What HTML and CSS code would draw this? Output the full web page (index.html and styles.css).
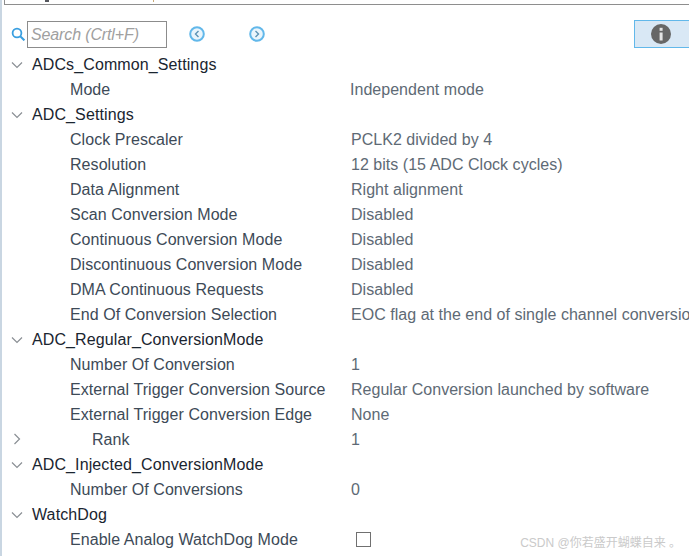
FILE: index.html
```html
<!DOCTYPE html>
<html lang="en">
<head>
    <meta charset="UTF-8">
    <title>ADC Parameter Settings</title>
    <link rel="stylesheet" href="styles.css">
</head>
<body>

<div class="panel">
    <div class="top-rule">
        <span class="clip-mark"></span>
        <span class="clip-mark clip-mark-2"></span>
    </div>

    <!-- Search bar -->
    <div class="toolbar">
        <svg class="icon-search" width="14" height="14" viewBox="0 0 14 14">
            <circle cx="6" cy="6" r="4.4" fill="none" stroke="#3a9fe0" stroke-width="1.8"/>
            <path d="M9 9l4.4 4.4" stroke="#3a9fe0" stroke-width="2"/>
        </svg>
        <div class="search-box">Search (Crtl+F)</div>
        <svg class="nav-btn" width="16" height="16" viewBox="0 0 16 16">
            <circle cx="8" cy="8" r="6.8" fill="#eaf5fc" stroke="#62b8ea" stroke-width="2"/>
            <path d="M9.5 5L6.5 8l3 3" fill="none" stroke="#5c93b5" stroke-width="1.4"/>
        </svg>
        <svg class="nav-btn nav-next" width="16" height="16" viewBox="0 0 16 16">
            <circle cx="8" cy="8" r="6.8" fill="#eaf5fc" stroke="#62b8ea" stroke-width="2"/>
            <path d="M6.5 5l3 3-3 3" fill="none" stroke="#5c93b5" stroke-width="1.4"/>
        </svg>
        <div class="info-btn">
            <svg width="20" height="20" viewBox="0 0 20 20">
                <circle cx="10" cy="10" r="10" fill="#666"/>
                <rect x="8.6" y="8.5" width="3" height="8" fill="#e4e4e4"/>
                <rect x="8.6" y="3.8" width="3" height="3" fill="#e4e4e4"/>
            </svg>
        </div>
    </div>

    <!-- Parameter tree -->
    <div class="tree">
        <div class="row group"><svg class="arrow" viewBox="0 0 12 8"><path d="M1 1.5l5 5 5-5"/></svg><span>ADCs_Common_Settings</span></div>
        <div class="row"><span class="name">Mode</span><span class="value shift-left">Independent mode</span></div>

        <div class="row group"><svg class="arrow" viewBox="0 0 12 8"><path d="M1 1.5l5 5 5-5"/></svg><span>ADC_Settings</span></div>
        <div class="row"><span class="name">Clock Prescaler</span><span class="value">PCLK2 divided by 4</span></div>
        <div class="row"><span class="name">Resolution</span><span class="value">12 bits (15 ADC Clock cycles)</span></div>
        <div class="row"><span class="name">Data Alignment</span><span class="value">Right alignment</span></div>
        <div class="row"><span class="name">Scan Conversion Mode</span><span class="value">Disabled</span></div>
        <div class="row"><span class="name">Continuous Conversion Mode</span><span class="value">Disabled</span></div>
        <div class="row"><span class="name">Discontinuous Conversion Mode</span><span class="value">Disabled</span></div>
        <div class="row"><span class="name">DMA Continuous Requests</span><span class="value">Disabled</span></div>
        <div class="row"><span class="name">End Of Conversion Selection</span><span class="value">EOC flag at the end of single channel conversion</span></div>

        <div class="row group"><svg class="arrow" viewBox="0 0 12 8"><path d="M1 1.5l5 5 5-5"/></svg><span>ADC_Regular_ConversionMode</span></div>
        <div class="row"><span class="name">Number Of Conversion</span><span class="value">1</span></div>
        <div class="row"><span class="name">External Trigger Conversion Source</span><span class="value">Regular Conversion launched by software</span></div>
        <div class="row"><span class="name">External Trigger Conversion Edge</span><span class="value">None</span></div>
        <div class="row"><svg class="arrow arrow-right" viewBox="0 0 8 12"><path d="M1.5 1l5 5-5 5"/></svg><span class="name sub">Rank</span><span class="value">1</span></div>

        <div class="row group"><svg class="arrow" viewBox="0 0 12 8"><path d="M1 1.5l5 5 5-5"/></svg><span>ADC_Injected_ConversionMode</span></div>
        <div class="row"><span class="name">Number Of Conversions</span><span class="value">0</span></div>

        <div class="row group"><svg class="arrow" viewBox="0 0 12 8"><path d="M1 1.5l5 5 5-5"/></svg><span>WatchDog</span></div>
        <div class="row"><span class="name">Enable Analog WatchDog Mode</span><span class="value"><span class="check"></span></span></div>
    </div>
</div>

<div class="watermark">CSDN @你若盛开蝴蝶自来 。</div>

</body>
</html>
```
FILE: styles.css
```css
html, body {
    margin: 0;
    height: 100%;
    overflow: hidden;
}
body {
    font-family: "Liberation Sans", Arial, "Noto Sans CJK SC", sans-serif;
    font-size: 16px;
    background-color: white;
    color: #3d4a57;
}
.panel {
    height: 556px;
    box-sizing: border-box;
    border-left: 2px solid #c9d6e2;
    overflow: hidden;
}
.top-rule {
    display: flex;
    height: 4px;
    margin-left: 2px;
    border-left: 1px solid #8e8e8e;
    border-bottom: 1px solid #8e8e8e;
}
/* descenders of the tab title that is cut off above the frame */
.clip-mark {
    width: 4px;
    height: 2px;
    margin-left: 40px;
    background-color: #55585e;
}
.clip-mark-2 {
    width: 1px;
    margin-left: 104px;
    background-color: #c9a878;
}
.toolbar {
    display: flex;
    align-items: center;
    height: 28px;
    margin-top: 15px;
    padding-left: 9px;
}
.icon-search {
    flex: none;
}
.search-box {
    flex: none;
    width: 135px;
    height: 25px;
    line-height: 25px;
    margin-left: 2px;
    padding-left: 3px;
    border: 1px solid #8c8c8c;
    font-style: italic;
    letter-spacing: -0.13px;
    color: #a0a0a0;
}
.nav-btn {
    flex: none;
    margin-left: 22px;
}
.nav-next {
    margin-left: 44px;
}
.info-btn {
    flex: none;
    display: flex;
    align-items: center;
    justify-content: center;
    box-sizing: border-box;
    width: 60px;
    height: 28px;
    margin-left: 369px;
    padding-right: 6px;
    border: 1px solid #62b8ea;
    background-color: #d9e8f5;
}
.tree {
    margin-top: 4px;
}
.row {
    display: flex;
    align-items: center;
    height: 25px;
    white-space: nowrap;
    position: relative;
}
.group {
    color: #1a2530;
    padding-left: 30px;
    letter-spacing: 0.11px;
}
.arrow {
    position: absolute;
    left: 9px;
    top: 9px;
    width: 12px;
    height: 8px;
    fill: none;
    stroke: #8a8f94;
    stroke-width: 1.2;
}
.arrow-right {
    left: 11px;
    top: 6px;
    width: 8px;
    height: 12px;
}
.name {
    width: 281px;
    margin-left: 68px;
    flex: none;
    letter-spacing: 0.06px;
}
.sub {
    width: 259px;
    margin-left: 90px;
}
.value {
    flex: none;
    color: #5e6a75;
    letter-spacing: 0.03px;
}
.shift-left {
    margin-left: -1px;
}
.check {
    display: block;
    box-sizing: border-box;
    width: 15px;
    height: 15px;
    margin-left: 5px;
    border: 1px solid #707070;
}
.watermark {
    position: absolute;
    right: 8px;
    bottom: 6px;
    font-size: 12px;
    color: #cacaca;
}
```
